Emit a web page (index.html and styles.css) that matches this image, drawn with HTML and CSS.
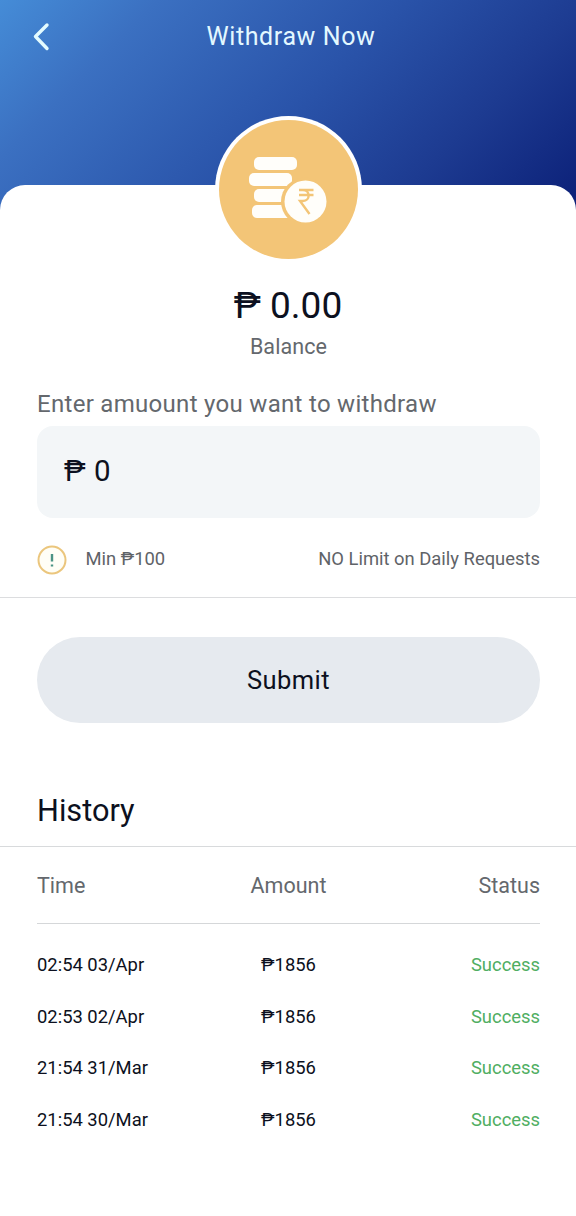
FILE: index.html
```html
<!DOCTYPE html>
<html lang="en">
<head>
<meta charset="utf-8">
<meta name="viewport" content="width=device-width, initial-scale=1">
<title>Withdraw Now</title>
<link rel="stylesheet" href="styles.css">
</head>
<body>
<header class="topbar">
  <svg class="back" viewBox="0 0 20 30" aria-label="Back"><path d="M16 3 4.500 14.500 16 26.500"/></svg>
  <h1 class="title">Withdraw Now</h1>
</header>
<main class="sheet">
  <div class="badge">
    <svg class="coins" viewBox="0 0 80 68">
      <g fill="#fffefa">
        <rect x="5" y="1" width="43" height="13" rx="5"/>
        <rect x="0" y="17" width="43" height="13" rx="5"/>
        <rect x="5" y="33" width="40" height="13" rx="5"/>
        <rect x="3" y="49" width="40" height="13" rx="5"/>
      </g>
      <circle cx="56" cy="45.500" r="24" fill="#f3c577"/>
      <circle cx="56.500" cy="45.500" r="21" fill="#fffefa"/>
      <path d="M50 34h14.500M50 39h14.500M51 34h3c7.500 0 7.500 11 0 11H51l9.500 13" fill="none" stroke="#f3c577" stroke-width="2.400"/>
    </svg>
  </div>
  <section class="balance">
    <p class="total">₱ 0.00</p>
    <p class="caption">Balance</p>
  </section>
  <section class="request">
    <label class="prompt">Enter amuount you want to withdraw</label>
    <div class="field">₱ 0</div>
    <div class="limits">
      <svg class="info" viewBox="0 0 30 30"><circle cx="15" cy="15" r="13.500" fill="#fffef6" stroke="#ebc67d" stroke-width="2"/><path d="M15 9v7.500M15 19.500v2" stroke="#4b9384" stroke-width="2.400"/></svg>
      <span class="min">Min ₱100</span>
      <span class="max">NO Limit on Daily Requests</span>
    </div>
  </section>
  <div class="action"><button class="submit">Submit</button></div>
  <h2 class="history-title">History</h2>
  <section class="history">
    <div class="row head"><span>Time</span><span>Amount</span><span>Status</span></div>
    <div class="rows">
      <div class="row"><span>02:54 03/Apr</span><span>₱1856</span><span class="ok">Success</span></div>
      <div class="row"><span>02:53 02/Apr</span><span>₱1856</span><span class="ok">Success</span></div>
      <div class="row"><span>21:54 31/Mar</span><span>₱1856</span><span class="ok">Success</span></div>
      <div class="row"><span>21:54 30/Mar</span><span>₱1856</span><span class="ok">Success</span></div>
    </div>
  </section>
</main>
</body>
</html>
```
FILE: styles.css
```css
* { box-sizing: border-box; }
body {
  margin: 0;
  height: 1216px;
  font-family: Roboto, "Liberation Sans", sans-serif;
  color: #0c1020;
  background: linear-gradient(135deg, #458cd7 0%, #3b70c1 20%, #2a54aa 50%, #1d3b91 75%, #0b1f77 100%) 0 0 / 576px 215px no-repeat #fff;
}
h1, h2, p { margin: 0; font-weight: 400; }
.topbar {
  display: grid;
  grid-template-columns: 60px 1fr 60px;
  align-items: center;
  height: 185px;
  padding: 0 0 111px;
}
.back {
  width: 20px;
  height: 30px;
  margin-left: 31px;
  fill: none;
  stroke: #e3fbff;
  stroke-width: 3.4;
  stroke-linecap: round;
  stroke-linejoin: round;
}
.title {
  color: #e3f8ff;
  font-size: 25px;
  line-height: 30px;
  letter-spacing: 0.6px;
  text-align: center;
  padding-left: 6px;
}
.sheet {
  display: flex;
  flex-direction: column;
  height: 1031px;
  background: #fff;
  border-radius: 25px 25px 0 0;
}
.badge {
  display: flex;
  align-self: center;
  width: 139px;
  height: 139px;
  margin: -65px 0 4px;
  padding: 36px 0 0 30px;
  border-radius: 50%;
  background: #f3c577;
  box-shadow: 0 0 0 4px #fff;
}
.coins { width: 80px; height: 68px; }
.balance { text-align: center; }
.total { margin-top: 20px; font-size: 37px; line-height: 46px; }
.caption { margin-top: 4px; font-size: 21.5px; line-height: 28px; letter-spacing: 0.1px; color: #64686d; padding-left: 1px; }
.request { padding: 26px 36px 23px 37px; border-bottom: 1px solid #dcdddf; }
.prompt { display: block; font-size: 24px; line-height: 34px; letter-spacing: 0.3px; color: #64686d; }
.field {
  height: 92px;
  margin-top: 5px;
  padding: 0 27px;
  border-radius: 16px;
  background: #f3f6f8;
  font-size: 29.5px;
  line-height: 91px;
  letter-spacing: 0.6px;
}
.limits { display: flex; align-items: center; height: 30px; margin-top: 26px; font-size: 18.4px; color: #5f6368; }
.info { width: 30px; height: 30px; margin: 1px 19px 0 -0.5px; }
.min, .max { margin-top: -1px; }
.max { margin-left: auto; }
.action { padding: 39px 36px 0 37px; }
.submit {
  display: block;
  width: 100%;
  height: 86px;
  border: 0;
  border-radius: 43px;
  background: #e6eaef;
  color: #0c1020;
  font: 25.5px Roboto, sans-serif;
  letter-spacing: 0.4px;
}
.history-title { margin-top: 64px; padding: 0 37px; height: 60px; border-bottom: 1px solid #d8dadc; font-size: 30.7px; line-height: 48px; }
.history { padding: 0 36px 0 37px; }
.row { display: grid; grid-template-columns: 1fr 1fr 1fr; align-items: center; height: 51.7px; font-size: 18.4px; }
.row > :nth-child(2) { text-align: center; }
.row > :last-child { text-align: right; }
.head { height: 77px; border-bottom: 1px solid #d5d7d9; font-size: 21.5px; color: #64686d; }
.rows { padding-top: 14.6px; }
.ok { color: #4fae62; }
```
